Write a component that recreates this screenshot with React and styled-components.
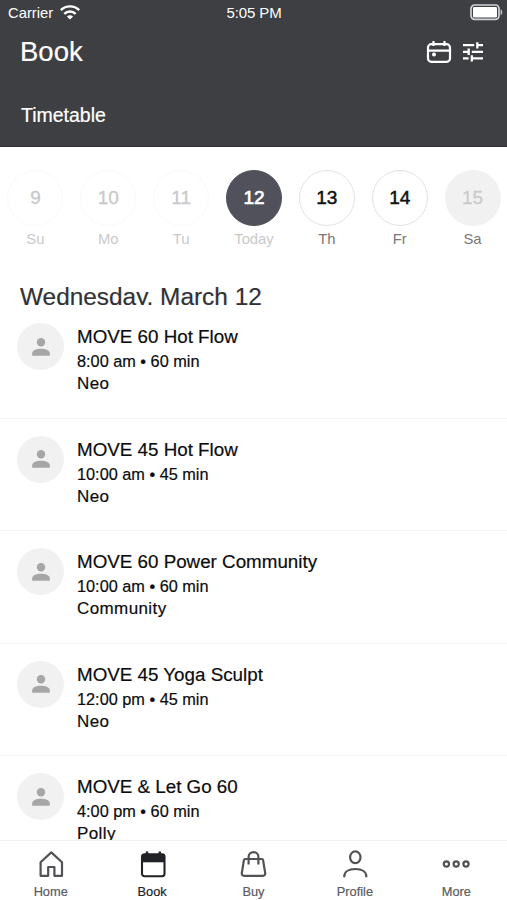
import React, { useState } from "react";
import styled, { createGlobalStyle } from "styled-components";

const days = [
  { num: 9, name: "Su", state: "past" },
  { num: 10, name: "Mo", state: "past" },
  { num: 11, name: "Tu", state: "past" },
  { num: 12, name: "Today", state: "selected" },
  { num: 13, name: "Th", state: "open" },
  { num: 14, name: "Fr", state: "open" },
  { num: 15, name: "Sa", state: "closed" },
];

const classes = [
  { title: "MOVE 60 Hot Flow", time: "8:00 am • 60 min", teacher: "Neo" },
  { title: "MOVE 45 Hot Flow", time: "10:00 am • 45 min", teacher: "Neo" },
  { title: "MOVE 60 Power Community", time: "10:00 am • 60 min", teacher: "Community" },
  { title: "MOVE 45 Yoga Sculpt", time: "12:00 pm • 45 min", teacher: "Neo" },
  { title: "MOVE & Let Go 60", time: "4:00 pm • 60 min", teacher: "Polly" },
];

const WifiIcon = () => (
  <svg width="20" height="15" viewBox="0 0 20 15" fill="none" stroke="#fff" strokeWidth="2.3">
    <path d="M.8 5.2C6 .2 14 .2 19.2 5.2" />
    <path d="M4.3 8.9c3.2-3.2 8.2-3.2 11.4 0" />
    <path d="M10 14.6 6.9 11.5c1.7-1.7 4.5-1.7 6.2 0z" fill="#fff" stroke="none" />
  </svg>
);

const BatteryIcon = () => (
  <svg width="33" height="17" viewBox="0 0 33 17">
    <rect x="1" y="1" width="28" height="14.4" rx="3.6" fill="none" stroke="#d2d3d6" strokeWidth="1.7" />
    <rect x="3" y="3" width="24" height="10.4" rx="1.2" fill="#fff" />
    <path d="M30.6 5.2c2.2.6 2.2 5.4 0 6z" fill="#c4c5c9" />
  </svg>
);

const CalendarIcon = () => (
  <svg width="26" height="24" viewBox="0 0 26 24" fill="none" stroke="#fff" strokeWidth="2.2">
    <rect x="2" y="4.2" width="22" height="17.6" rx="3.4" />
    <path d="M2 10.6h22M7.5 1v5M18.5 1v5" />
    <circle cx="8" cy="14.4" r="2" fill="#fff" stroke="none" />
  </svg>
);

const FilterIcon = () => (
  <svg width="20" height="20" viewBox="0 0 20 20" fill="none" stroke="#fff" strokeWidth="2.3">
    <path d="M0 3.2h11.2M14.3 3.2H20M14.3.2v6.2" />
    <path d="M0 9.8h5.6M8.8 9.8H20M5.7 6.6v6.4" />
    <path d="M0 16.4h5.6M8.8 16.4H20M8.8 13.2v6.4" />
  </svg>
);

const PersonIcon = () => (
  <svg width="18" height="18" viewBox="0 0 18 18" fill="#a6a6a6">
    <circle cx="9" cy="4.3" r="4.2" />
    <path d="M.2 17.8v-2.6C.2 12.1 5 10.7 9 10.7s8.8 1.4 8.8 4.5v2.6z" />
  </svg>
);

const HomeIcon = () => (
  <svg width="28" height="28" viewBox="0 0 28 28" fill="none" stroke="#515256" strokeWidth="2.2" strokeLinejoin="round">
    <path d="M3.6 12.2 14.3 2.4 25 12.2V25.8h-7.6V17h-6.2v8.8H3.6z" />
  </svg>
);

const BookIcon = () => (
  <svg width="28" height="28" viewBox="0 0 28 28" fill="none" stroke="#212226" strokeWidth="2.1">
    <rect x="4" y="4.2" width="22.5" height="22" rx="2.4" />
    <path d="M4 4h22.5v8.3H4z" fill="#212226" stroke="none" />
    <path d="M9 1.4v4M21.8 1.4v4" strokeWidth="2.4" />
  </svg>
);

const BuyIcon = () => (
  <svg width="28" height="28" viewBox="0 0 28 28" fill="none" stroke="#515256" strokeWidth="2.2">
    <path d="M6.2 9h16.6c.8 0 1.2.4 1.3 1.1l2.1 13c.2 1.7-.7 2.7-2.3 2.7H5.1c-1.600 0-2.500-1-2.300-2.700l2.100-13C5 9.400 5.400 9 6.200 9z" />
    <path d="M9.6 14.6V7c0-6.6 9.8-6.6 9.8 0v7.6" />
  </svg>
);

const ProfileIcon = () => (
  <svg width="28" height="28" viewBox="0 0 28 28" fill="none" stroke="#515256" strokeWidth="2.2">
    <ellipse cx="14.3" cy="7.3" rx="5.2" ry="5.9" />
    <path d="M3.3 27.3v-1c0-4.300 4-7.300 11-7.300s11 3 11 7.300v1" />
  </svg>
);

const MoreIcon = () => (
  <svg width="28" height="28" viewBox="0 0 28 28" fill="none" stroke="#515256" strokeWidth="2.2">
    <circle cx="4.4" cy="14" r="2.6" />
    <circle cx="14.2" cy="14" r="2.6" />
    <circle cx="24" cy="14" r="2.6" />
  </svg>
);

const tabs = [
  { label: "Home", Icon: HomeIcon },
  { label: "Book", Icon: BookIcon },
  { label: "Buy", Icon: BuyIcon },
  { label: "Profile", Icon: ProfileIcon },
  { label: "More", Icon: MoreIcon },
];

const App = () => {
  const [tab, setTab] = useState("Book");

  return (
    <>
      <GlobalStyle />
      <Screen>
        <Header>
          <StatusBar>
            <Carrier>
              Carrier
              <WifiIcon />
            </Carrier>
            <Clock>5:05 PM</Clock>
            <Battery>
              <BatteryIcon />
            </Battery>
          </StatusBar>
          <TitleBar>
            <Title>Book</Title>
            <Actions>
              <IconButton aria-label="Calendar">
                <CalendarIcon />
              </IconButton>
              <IconButton aria-label="Filters">
                <FilterIcon />
              </IconButton>
            </Actions>
          </TitleBar>
          <SubTitle>Timetable</SubTitle>
        </Header>
        <Week>
          {days.map((day) => (
            <Day key={day.num}>
              <DayNumber $state={day.state}>{day.num}</DayNumber>
              <DayName $state={day.state}>{day.name}</DayName>
            </Day>
          ))}
        </Week>
        <DateHeading>Wednesday, March 12</DateHeading>
        <ClassList>
          {classes.map((item, i) => (
            <ClassRow key={i}>
              <Avatar>
                <PersonIcon />
              </Avatar>
              <div>
                <ClassTitle>{item.title}</ClassTitle>
                <ClassTime>{item.time}</ClassTime>
                <Teacher>{item.teacher}</Teacher>
              </div>
            </ClassRow>
          ))}
        </ClassList>
        <TabBar>
          {tabs.map(({ label, Icon }) => (
            <Tab key={label} $active={tab === label} onClick={() => setTab(label)}>
              <Icon />
              <TabLabel>{label}</TabLabel>
            </Tab>
          ))}
        </TabBar>
      </Screen>
    </>
  );
};
export default App;

const GlobalStyle = createGlobalStyle`
  * {
    box-sizing: border-box;
  }
  body {
    margin: 0;
    background: #fff;
    font-family: "Liberation Sans", Arial, sans-serif;
  }
  svg {
    display: block;
    flex-shrink: 0;
  }
  button {
    padding: 0;
    border: 0;
    background: none;
    font-family: inherit;
  }
`;

const Screen = styled.div`
  display: flex;
  flex-direction: column;
  width: 507px;
  height: 900px;
  overflow: hidden;
`;

const Header = styled.header`
  flex: none;
  height: 147px;
  background: #3e3f43;
  border-bottom: 1px solid #2d2e31;
  color: #fff;
`;

const StatusBar = styled.div`
  display: grid;
  grid-template-columns: 1fr auto 1fr;
  align-items: center;
  height: 25px;
  padding: 0 4px 0 8px;
  font-size: 15px;
`;

const Carrier = styled.div`
  display: flex;
  align-items: center;
  gap: 7px;
  font-size: 14.8px;
`;

const Clock = styled.div`
  margin-left: -3px;
  font-size: 15px;
  line-height: 16px;
  letter-spacing: -0.1px;
`;

const Battery = styled.div`
  display: flex;
  justify-content: flex-end;
`;

const TitleBar = styled.div`
  display: flex;
  justify-content: space-between;
  height: 54px;
  padding: 0 24px 0 20px;
`;

const Title = styled.h1`
  margin: 0;
  font-size: 27.5px;
  font-weight: 400;
  line-height: 54px;
  -webkit-text-stroke: 0.2px #fff;
`;

const Actions = styled.div`
  display: flex;
  align-items: center;
  gap: 11px;
`;

const IconButton = styled.button`
  color: #fff;
`;

const SubTitle = styled.div`
  padding: 23px 21px 0;
  font-size: 19.5px;
  line-height: 27px;
  -webkit-text-stroke: 0.2px #fff;
`;

const Week = styled.div`
  display: grid;
  flex: none;
  grid-template-columns: repeat(7, 1fr);
  height: 131px;
  margin: 0 -2px 0 -1px;
  padding-top: 23px;
`;

const Day = styled.div`
  display: flex;
  flex-direction: column;
  align-items: center;
`;

const circles = {
  past: "color: #c9c9ca; background: #fff; border-color: #fafafa; -webkit-text-stroke: 0.3px #c9c9ca;",
  selected: "color: #fff; background: #50515a; border-color: #50515a; -webkit-text-stroke: 0.7px #fff;",
  open: "color: #111; background: #fff; border-color: #e2e2e2; -webkit-text-stroke: 0.5px #111;",
  closed: "color: #cbcbcb; background: #f1f1f1; border-color: #f1f1f1; -webkit-text-stroke: 0.3px #cbcbcb;",
};

const DayNumber = styled.div`
  display: flex;
  align-items: center;
  justify-content: center;
  width: 56px;
  height: 56px;
  border: 1px solid;
  border-radius: 50%;
  font-size: 19px;
  ${(props) => circles[props.$state]}
`;

const DayName = styled.div`
  margin-top: 4px;
  font-size: 14.8px;
  line-height: 18px;
  color: ${(props) => (props.$state === "past" || props.$state === "selected" ? "#c9c9ca" : "#77787b")};
`;

const DateHeading = styled.h2`
  flex: none;
  height: 27px;
  margin: 0;
  padding-left: 20px;
  overflow: hidden;
  font-size: 24.4px;
  font-weight: 400;
  line-height: 37px;
  color: #313235;
  -webkit-text-stroke: 0.2px #313235;
`;

const ClassList = styled.div`
  flex: 1;
  min-height: 0;
  padding-top: 1px;
  overflow: hidden;
`;

const ClassRow = styled.div`
  display: flex;
  gap: 13px;
  height: 112.5px;
  padding: 17px 17px 0;
  border-bottom: 1px solid #f5f5f5;
  color: #0c0c0d;
  -webkit-text-stroke: 0.2px #0c0c0d;
`;

const Avatar = styled.div`
  display: flex;
  flex: none;
  align-items: center;
  justify-content: center;
  width: 47px;
  height: 47px;
  border-radius: 50%;
  background: #f1f1f1;
`;

const ClassTitle = styled.div`
  margin-top: 1px;
  font-size: 18.8px;
  line-height: 25px;
`;

const ClassTime = styled.div`
  margin-top: 1px;
  font-size: 16.3px;
  line-height: 22px;
`;

const Teacher = styled.div`
  font-size: 17px;
  line-height: 23px;
  letter-spacing: 0.4px;
`;

const TabBar = styled.nav`
  display: grid;
  flex: none;
  grid-template-columns: repeat(5, 1fr);
  height: 60px;
  border-top: 1px solid #f1f1f1;
  background: #fff;
`;

const Tab = styled.button`
  display: flex;
  flex-direction: column;
  align-items: center;
  justify-content: flex-start;
  padding-top: 9px;
  color: ${(props) => (props.$active ? "#212226" : "#5a5b5f")};
`;

const TabLabel = styled.span`
  margin-top: 6px;
  font-size: 12.8px;
  line-height: 16px;
  -webkit-text-stroke: 0.2px currentColor;
`;
